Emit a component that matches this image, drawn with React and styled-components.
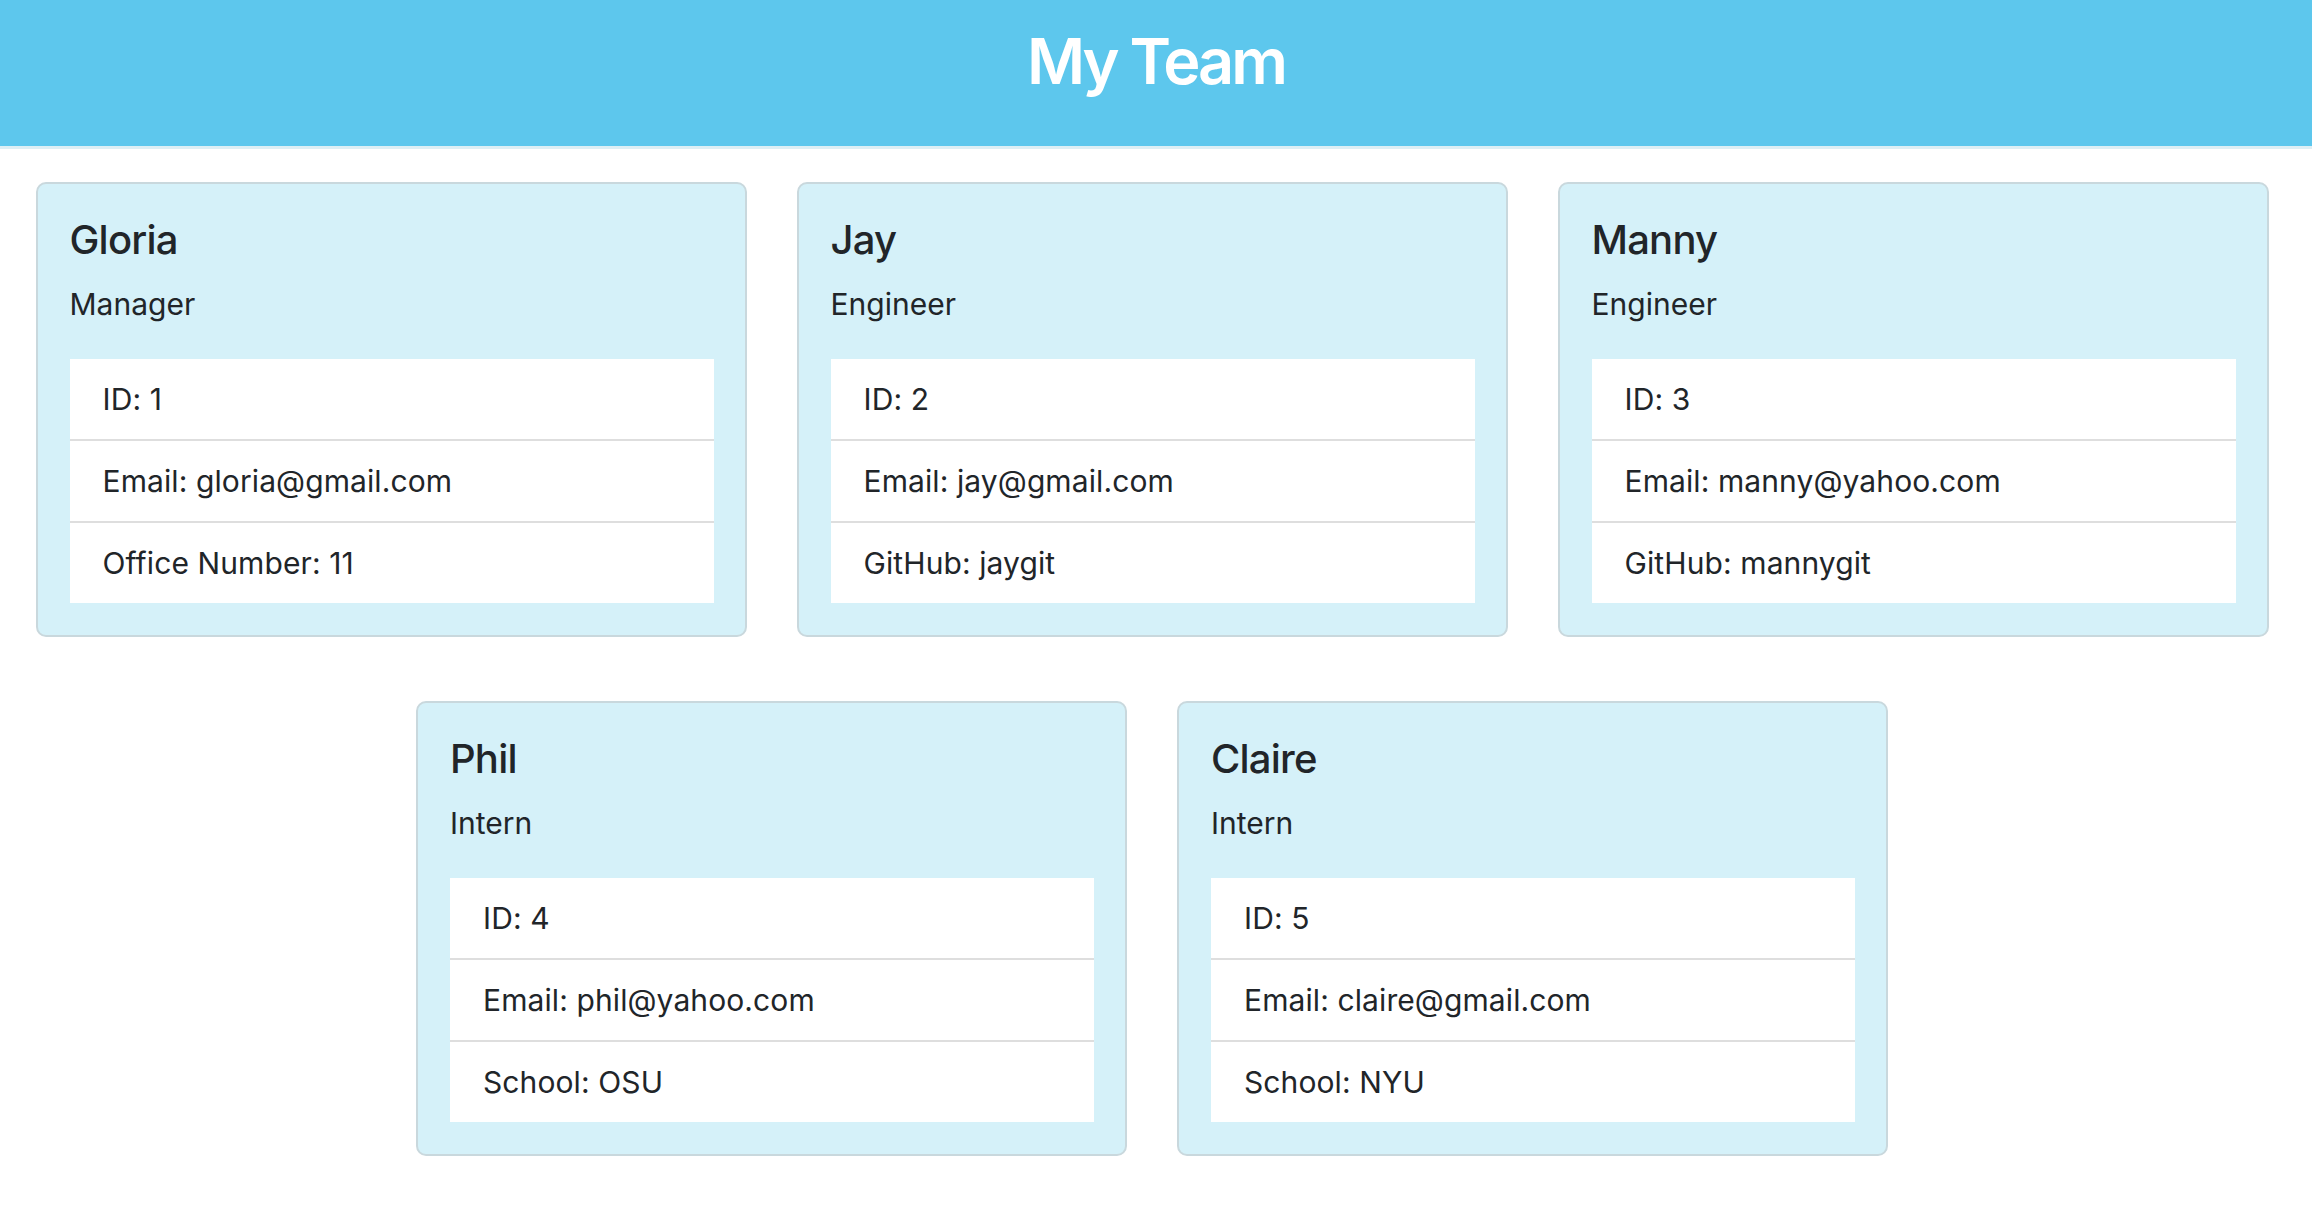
import React from 'react'
import styled, { createGlobalStyle } from 'styled-components'

const GlobalStyle = createGlobalStyle`
    * {
        box-sizing: border-box;
    }
    body {
        margin: 0;
        background: #FFFFFF;
        font-family: Inter, "Noto Sans", "Liberation Sans", sans-serif;
        color: #212529;
    }
`

const Header = styled.header`
    background: #5DC7ED;
    height: 149px;
    border-bottom: 3px solid #DDEFF5;
    display: flex;
    align-items: center;
    justify-content: center;
`

const Title = styled.h1`
    margin: 0 0 24px 0;
    font-size: 63px;
    font-weight: 600;
    letter-spacing: -3px;
    color: #FFFFFF;
`

const Board = styled.main`
    display: flex;
    flex-wrap: wrap;
    justify-content: center;
    column-gap: 50px;
    row-gap: 64px;
    padding: 33px 8px 40px 0;
`

const Card = styled.section`
    width: 711px;
    background: #D5F1F9;
    border: 2px solid #C9D8DD;
    border-radius: 10px;
    padding: 32px 31px 32px 32px;
`

const Name = styled.h2`
    margin: 0;
    font-size: 40px;
    line-height: 48px;
    font-weight: 500;
    letter-spacing: -0.8px;
`

const Role = styled.div`
    margin: 17px 0 32px 0;
    font-size: 30px;
    line-height: 46px;
    letter-spacing: 0;
`

const List = styled.ul`
    list-style: none;
    margin: 0;
    padding: 0;
    background: #FFFFFF;
`

const Item = styled.li`
    padding: 17px 33px;
    font-size: 30px;
    line-height: 46px;
    letter-spacing: 0.1px;
    & + & {
        border-top: 2px solid #DEDEDE;
    }
`

const team = [
    { name: 'Gloria', role: 'Manager', id: 1, email: 'gloria@gmail.com', extra: 'Office Number: 11' },
    { name: 'Jay', role: 'Engineer', id: 2, email: 'jay@gmail.com', extra: 'GitHub: jaygit' },
    { name: 'Manny', role: 'Engineer', id: 3, email: 'manny@yahoo.com', extra: 'GitHub: mannygit' },
    { name: 'Phil', role: 'Intern', id: 4, email: 'phil@yahoo.com', extra: 'School: OSU' },
    { name: 'Claire', role: 'Intern', id: 5, email: 'claire@gmail.com', extra: 'School: NYU' },
]

const MemberCard = ({ member }) => (
    <Card>
        <Name>{member.name}</Name>
        <Role>{member.role}</Role>
        <List>
            <Item>ID: {member.id}</Item>
            <Item>Email: {member.email}</Item>
            <Item>{member.extra}</Item>
        </List>
    </Card>
)

const App = () => (
    <>
        <GlobalStyle />
        <Header>
            <Title>My Team</Title>
        </Header>
        <Board>
            {team.map((member) => <MemberCard key={member.id} member={member} />)}
        </Board>
    </>
)

export default App
